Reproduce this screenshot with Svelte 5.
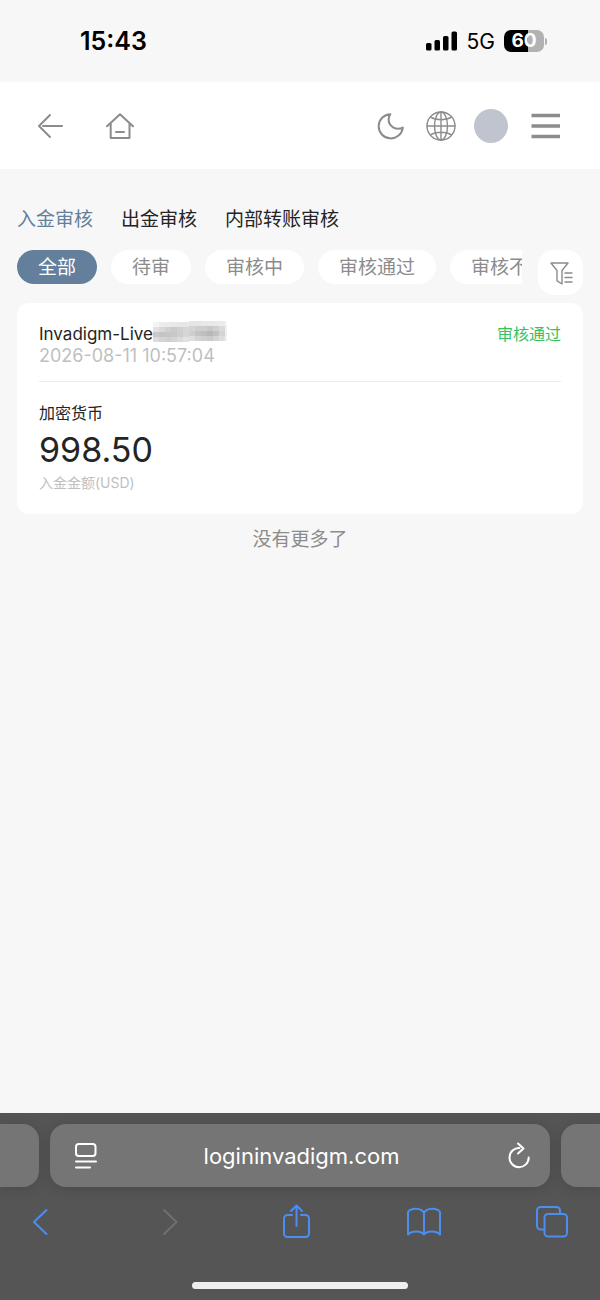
<script>
  let activeTab = $state(0);
  let activeStatus = $state(0);

  const tabs = ['入金审核', '出金审核', '内部转账审核'];
  const statuses = ['全部', '待审', '审核中', '审核通过', '审核不通过'];

  const records = [
    {
      account: 'Invadigm-Live',
      time: '2026-08-11 10:57:04',
      status: '审核通过',
      method: '加密货币',
      amount: '998.50',
      label: '入金金额(USD)'
    }
  ];

  // grey levels of the masked account number, one row per line of blocks
  const mask = [
    [244, 236, 235, 232, 231, 230, 229, 230, 232, 232, 233, 236, 246],
    [226, 216, 208, 202, 208, 214, 212, 206, 206, 200, 208, 218, 240],
    [200, 196, 198, 200, 206, 214, 206, 196, 190, 184, 194, 212, 238],
    [220, 212, 208, 212, 218, 226, 222, 212, 206, 202, 212, 222, 242]
  ];
</script>

<div class="page">
  <div class="status-bar">
    <span class="clock">15:43</span>
    <div class="signals">
      <svg width="32" height="20" viewBox="0 0 32 20" aria-hidden="true">
        <rect x="0" y="12" width="5.5" height="7.5" rx="1.6" />
        <rect x="8.5" y="9" width="5.5" height="10.5" rx="1.6" />
        <rect x="17" y="5" width="5.5" height="14.5" rx="1.6" />
        <rect x="25.5" y="0.5" width="5.5" height="19" rx="1.6" />
      </svg>
      <span class="network">5G</span>
      <div class="battery">
        <span class="level">60</span>
        <span class="cap"></span>
      </div>
    </div>
  </div>

  <header class="header">
    <div class="group left">
      <button aria-label="返回">
        <svg width="28" height="30" viewBox="0 0 28 30">
          <path d="M14 4L3 15l11 11M7 15h19" />
        </svg>
      </button>
      <button aria-label="首页">
        <svg width="28" height="30" viewBox="0 0 28 30">
          <path d="M1 15.3L14 3.2l13 12.1M4.7 12.4v14.6h18.8V12.4M10 21h8" />
        </svg>
      </button>
    </div>
    <div class="group right">
      <button aria-label="深色模式">
        <svg width="32" height="30" viewBox="0 0 32 30">
          <path d="M14.4 3.2A12.1 12.1 0 1 0 26.8 16.6C20.5 20 12 15.5 12.7 7.5C12.9 5.8 13.5 4.4 14.4 3.2Z" />
        </svg>
      </button>
      <button aria-label="语言">
        <svg class="globe" width="30" height="30" viewBox="0 0 30 30">
          <circle cx="15" cy="15" r="14" />
          <ellipse cx="15" cy="15" rx="6.5" ry="14" />
          <path d="M1 15h28M15 1v28M4.6 6.2C10 9.6 20 9.6 25.4 6.2M4.6 23.8C10 20.4 20 20.4 25.4 23.8" />
        </svg>
      </button>
      <button class="avatar" aria-label="账户"></button>
      <button aria-label="菜单">
        <svg class="menu" width="34" height="30" viewBox="0 0 34 30">
          <path d="M5.5 4.5H34M5.5 15H34M5.5 25.5H34" />
        </svg>
      </button>
    </div>
  </header>

  <main class="content">
    <nav class="tabs">
      {#each tabs as tab, i}
        <button class:active={activeTab === i} onclick={() => (activeTab = i)}>{tab}</button>
      {/each}
    </nav>

    <div class="filters">
      <div class="chips">
        {#each statuses as status, i}
          <button class="chip" class:active={activeStatus === i} onclick={() => (activeStatus = i)}>
            {status}
          </button>
        {/each}
      </div>
      <button class="filter-btn" aria-label="筛选">
        <svg width="26" height="26" viewBox="0 0 26 26">
          <path d="M3 3h17l-6 7.5V24l-5-3.2V10.5zM17 13h7M17 17.5h7M17 22h7" />
        </svg>
      </button>
    </div>

    {#each records as record}
      <article class="card">
        <div class="card-head">
          <div>
            <div class="account">
              {record.account}
              <svg class="mask" width="74" height="22" viewBox="0 0 74 22" aria-hidden="true">
                {#each mask as row, y}
                  {#each row as level, x}
                    <rect
                      x={x * 6}
                      y={y * 5 + (x < 6 ? 1 : 0)}
                      width="6"
                      height="5"
                      fill="rgb({level}, {level}, {level})"
                    />
                  {/each}
                {/each}
              </svg>
            </div>
            <div class="time">{record.time}</div>
          </div>
          <span class="state">{record.status}</span>
        </div>
        <div class="method">{record.method}</div>
        <div class="amount">{record.amount}</div>
        <div class="label">{record.label}</div>
      </article>
    {/each}

    <p class="no-more">没有更多了</p>
  </main>

  <footer class="browser">
    <div class="address-row">
      <div class="side prev"></div>
      <div class="address">
        <button aria-label="页面菜单">
          <svg width="24" height="28" viewBox="0 0 24 28">
            <rect x="3" y="2" width="19.5" height="12" rx="2.8" />
            <path d="M3 19.500h20M3 25.500h14" />
          </svg>
        </button>
        <a href="#top">logininvadigm.com</a>
        <button aria-label="刷新">
          <svg width="24" height="28" viewBox="0 0 24 28">
            <path d="M13.5 6A9.6 9.6 0 1 0 22.7 15.500M12 1.5l5.5 5-5.5 5" />
          </svg>
        </button>
      </div>
      <div class="side next"></div>
    </div>
    <div class="toolbar">
      <button aria-label="后退">
        <svg width="34" height="36" viewBox="0 0 34 36">
          <path d="M22.5 6L10 18l12.5 12" />
        </svg>
      </button>
      <button aria-label="前进" disabled>
        <svg width="34" height="36" viewBox="0 0 34 36">
          <path d="M13 6l12.5 12L13 30" />
        </svg>
      </button>
      <button aria-label="分享">
        <svg width="34" height="36" viewBox="0 0 34 36">
          <path d="M13 11H8.500a3.500 3.500 0 0 0-3.500 3.500v15a3.500 3.500 0 0 0 3.500 3.500h18a3.500 3.500 0 0 0 3.500-3.500v-15a3.500 3.500 0 0 0-3.500-3.500H22M17.500 22V2M12 7l5.500-5.500L23 7" />
        </svg>
      </button>
      <button aria-label="书签">
        <svg width="36" height="36" viewBox="0 0 36 36">
          <path d="M18 9C15.500 3.500 5 3.500 2 8v22.500c4-4 13-4 16 0c3-4 12-4 16 0V8C31 3.500 20.500 3.500 18 9zM18 9v21.500" />
        </svg>
      </button>
      <button aria-label="标签页">
        <svg width="34" height="36" viewBox="0 0 34 36">
          <path d="M9 25.500H5.500A3.500 3.500 0 0 1 2 22V6.500A3.500 3.500 0 0 1 5.500 3h16A3.500 3.500 0 0 1 25 6.500V10" />
          <rect x="9.5" y="10" width="22.5" height="22.5" rx="3.5" />
        </svg>
      </button>
    </div>
    <div class="home-indicator"></div>
  </footer>
</div>

<style>
  :global(body) {
    margin: 0;
    background: #f7f7f7;
  }

  .page {
    display: flex;
    flex-direction: column;
    min-height: 100vh;
    font-family: Inter, 'Noto Sans CJK SC', sans-serif;
    color: #242424;
  }

  button {
    padding: 0;
    border: none;
    background: none;
    font: inherit;
    color: inherit;
    cursor: pointer;
  }

  svg {
    display: block;
    flex-shrink: 0;
  }

  button svg {
    fill: none;
    stroke: currentColor;
    stroke-width: 2;
    stroke-linecap: round;
    stroke-linejoin: round;
  }

  .status-bar {
    display: flex;
    align-items: center;
    justify-content: space-between;
    height: 82px;
    padding: 0 53px 0 80px;
    box-sizing: border-box;
    color: #000;
  }

  .clock {
    font-size: 25px;
    font-weight: 600;
  }

  .signals {
    display: flex;
    align-items: center;
    gap: 9px;
  }

  .network {
    font-size: 21px;
  }

  .battery {
    display: flex;
    align-items: center;
    gap: 1px;
  }

  .level {
    width: 40px;
    border-radius: 7px;
    background: linear-gradient(90deg, #000 60%, #b2b2b2 60%);
    color: #fff;
    font-size: 19px;
    font-weight: 700;
    line-height: 22px;
    text-align: center;
  }

  .cap {
    width: 2px;
    height: 7px;
    border-radius: 0 2px 2px 0;
    background: #b2b2b2;
  }

  .header {
    display: flex;
    align-items: center;
    justify-content: space-between;
    height: 87px;
    padding: 0 40px 0 36px;
    box-sizing: border-box;
    background: #fff;
    color: #8c8c8c;
  }

  .group {
    display: flex;
    align-items: center;
  }

  .left {
    gap: 42px;
  }

  .right {
    gap: 18px;
  }

  .globe {
    stroke-width: 1.4;
  }

  .menu {
    stroke-width: 3.6;
    stroke-linecap: butt;
  }

  .avatar {
    width: 34px;
    height: 34px;
    border-radius: 50%;
    background: #c0c4cf;
  }

  .content {
    flex: 1;
    padding: 36px 17px 0;
  }

  .tabs {
    display: flex;
    gap: 28px;
    font-size: 19px;
    line-height: 30px;
  }

  .tabs .active {
    color: #637f9b;
  }

  .filters {
    display: flex;
    align-items: flex-start;
    gap: 16px;
    margin-top: 15px;
  }

  .chips {
    display: flex;
    flex: 1;
    gap: 14px;
    min-width: 0;
    overflow: hidden;
  }

  .chip {
    flex-shrink: 0;
    padding: 2px 21px 0;
    border-radius: 17px;
    background: #fff;
    color: #8c8c8c;
    font-size: 19px;
    line-height: 32px;
  }

  .chip.active {
    background: #637f9b;
    color: #fff;
  }

  .filter-btn {
    display: flex;
    align-items: center;
    justify-content: center;
    width: 45px;
    height: 45px;
    border-radius: 16px;
    background: #fff;
    color: #8c8c8c;
  }

  .filter-btn svg {
    stroke-width: 1.4;
  }

  .card {
    margin-top: 8px;
    padding: 20px 22px 24px;
    border-radius: 12px;
    background: #fff;
  }

  .card-head {
    display: flex;
    align-items: flex-start;
    justify-content: space-between;
    padding-bottom: 14px;
    border-bottom: 1px solid #ebebeb;
  }

  .account {
    display: flex;
    align-items: center;
    height: 22px;
    font-size: 17px;
  }

  .mask {
    align-self: flex-start;
    margin-top: -2px;
  }

  .time {
    color: #bfbfbf;
    font-size: 18px;
    line-height: 22px;
  }

  .state {
    color: #34c35f;
    font-size: 16px;
    line-height: 22px;
  }

  .method {
    margin-top: 20px;
    font-size: 16px;
    line-height: 22px;
  }

  .amount {
    font-size: 34px;
    line-height: 52px;
  }

  .label {
    color: #bfbfbf;
    font-size: 14px;
    line-height: 14px;
  }

  .no-more {
    margin: 11px 0 0;
    color: #8c8c8c;
    font-size: 19px;
    line-height: 30px;
    text-align: center;
  }

  .browser {
    padding-top: 11px;
    background: #555;
    overflow: hidden;
  }

  .address-row {
    display: flex;
    gap: 11px;
  }

  .side,
  .address {
    height: 63px;
    background: #757575;
    box-shadow: 0 2px 14px rgba(0, 0, 0, 0.14);
  }

  .side {
    width: 39px;
  }

  .prev {
    border-radius: 0 16px 16px 0;
  }

  .next {
    border-radius: 16px 0 0 16px;
  }

  .address {
    display: flex;
    flex: 1;
    align-items: center;
    justify-content: space-between;
    padding: 0 20px 0 23px;
    border-radius: 16px;
    color: #fff;
  }

  .address a {
    color: inherit;
    font-size: 22px;
    text-decoration: none;
  }

  .toolbar {
    display: flex;
    justify-content: space-between;
    padding: 17px 31px 0 24px;
    color: #4b8df0;
  }

  .toolbar button:disabled {
    color: #707070;
  }

  .home-indicator {
    width: 36%;
    height: 7px;
    margin: 42px auto 11px;
    border-radius: 4px;
    background: #eee;
  }
</style>
